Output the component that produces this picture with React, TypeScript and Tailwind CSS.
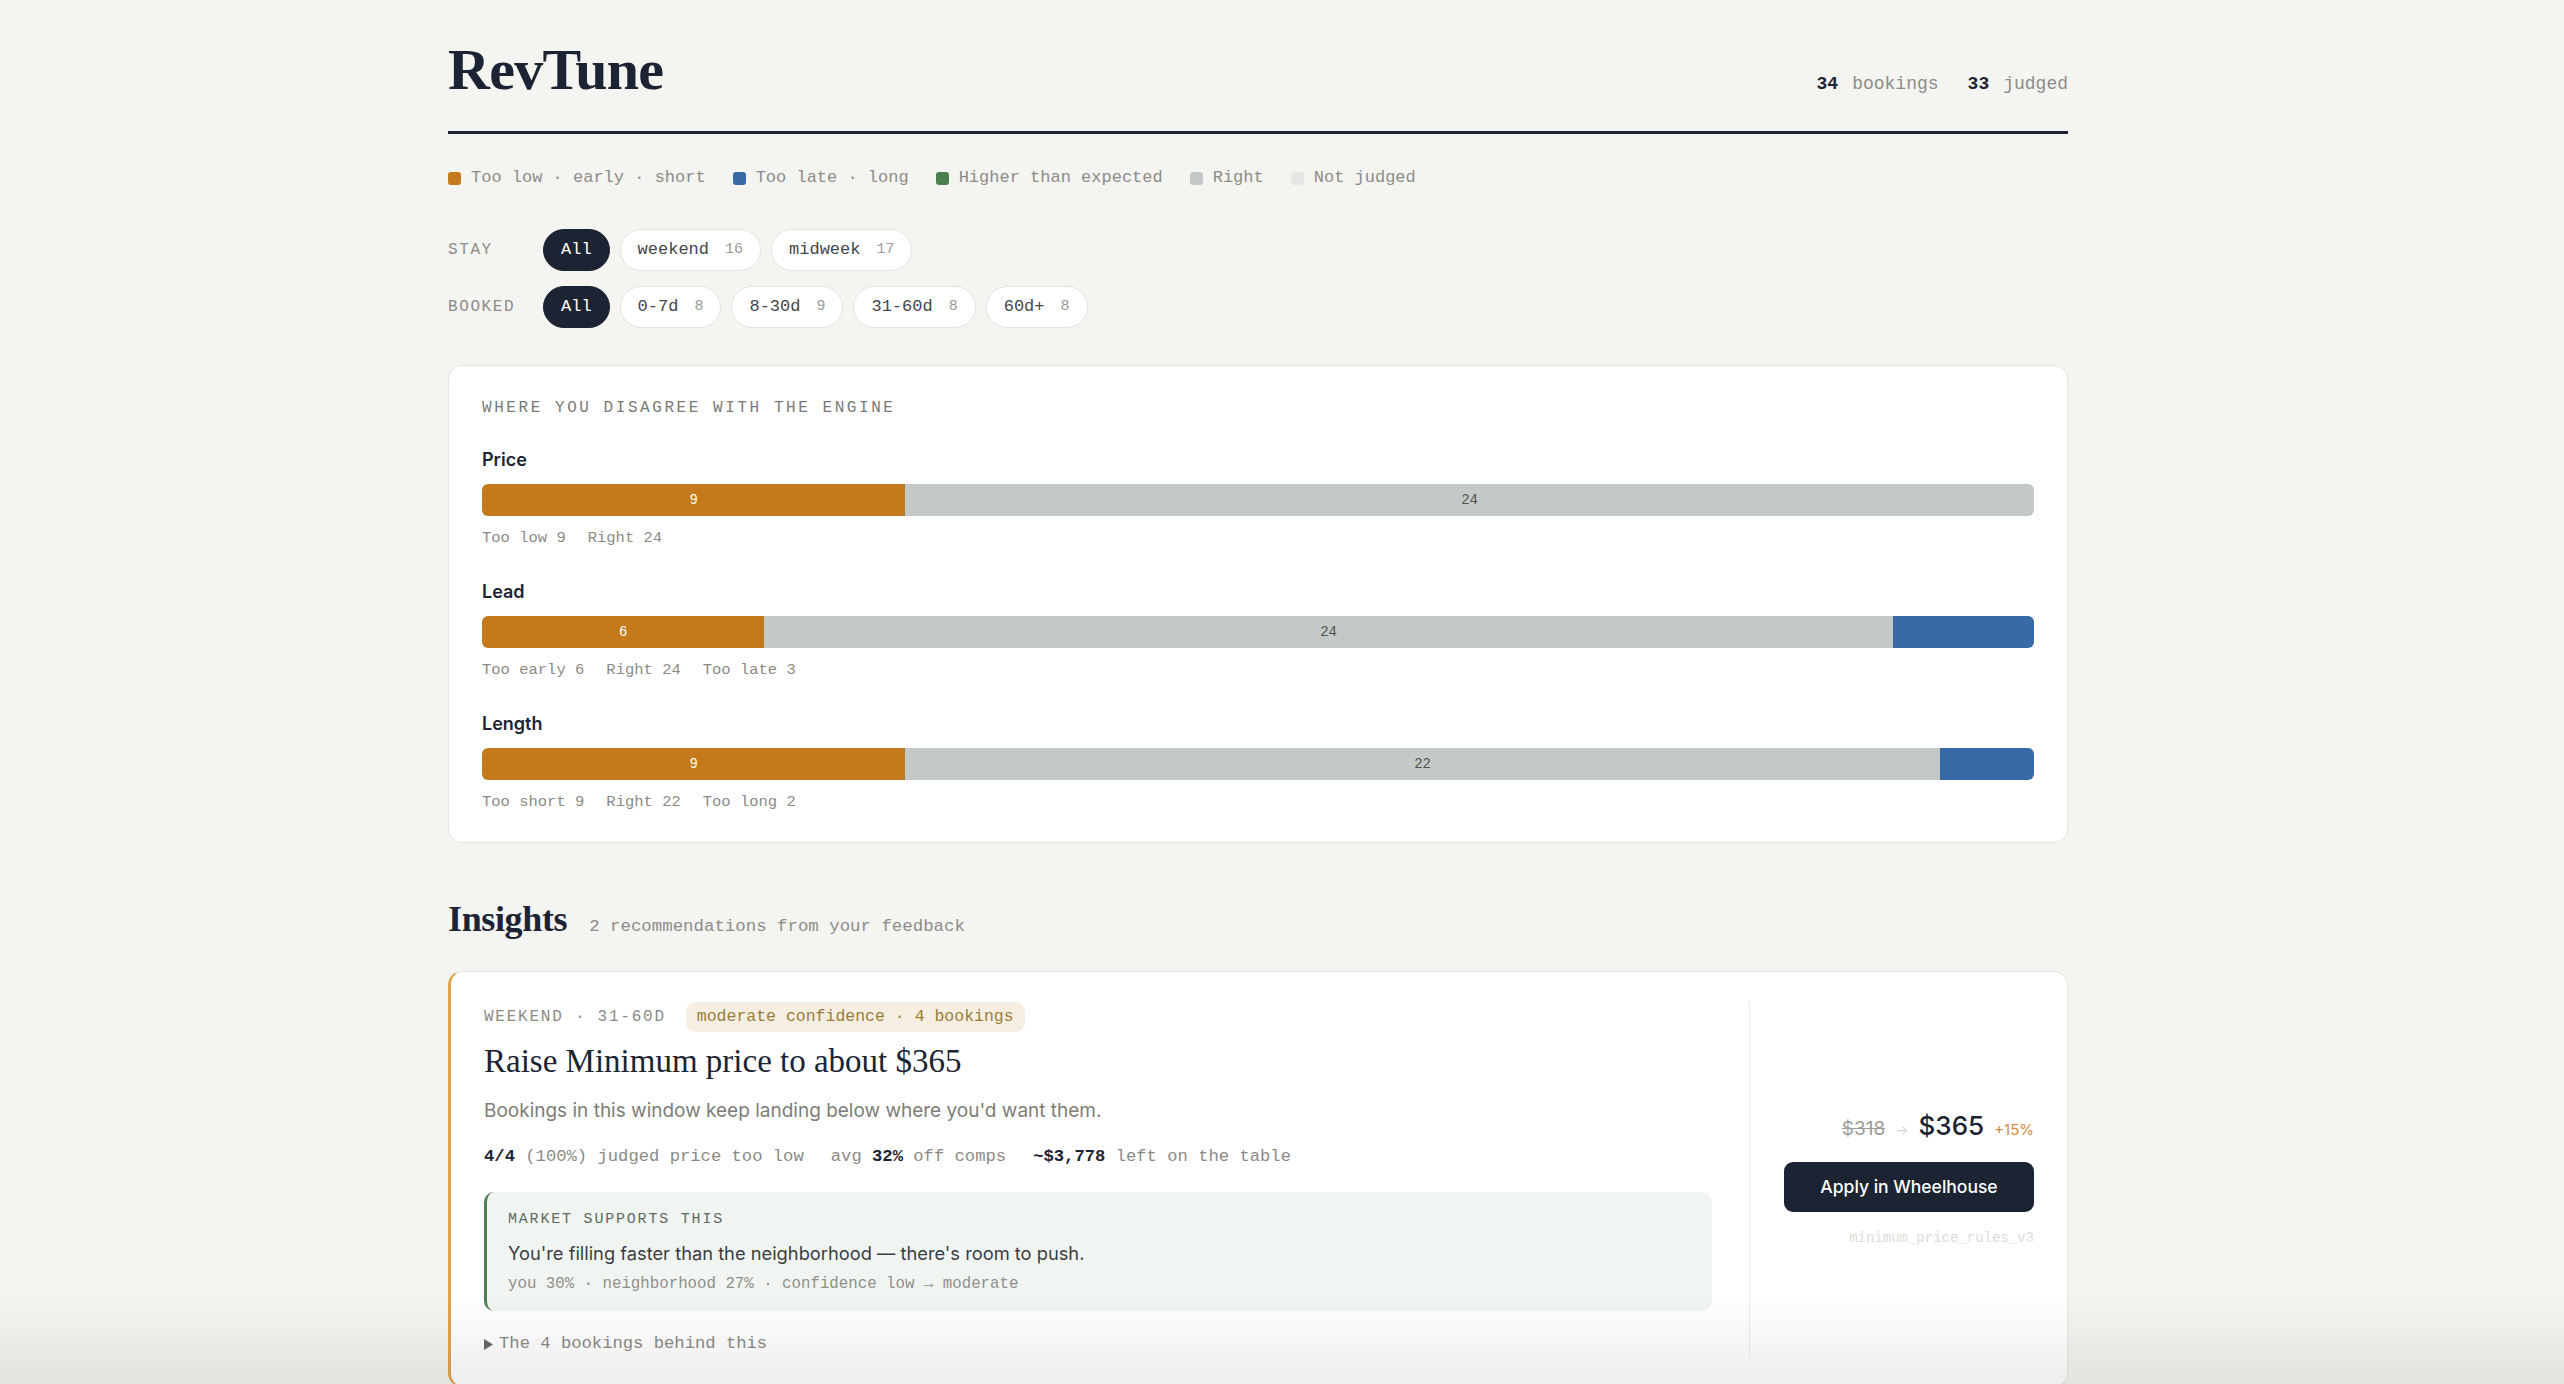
import React from "react";

const MONO = "font-['Liberation_Mono','DejaVu_Sans_Mono',monospace]";
const SERIF = "font-['Liberation_Serif','DejaVu_Serif',serif]";
const SANS = "font-['Inter','Noto_Sans',sans-serif]";

type Seg = { n: number; color: string; text: string; show: boolean };

const rows: { label: string; segs: Seg[]; summary: string[] }[] = [
  {
    label: "Price",
    segs: [
      { n: 9, color: "bg-[#c47a1b]", text: "text-white", show: true },
      { n: 24, color: "bg-[#c3c9c6]", text: "text-[#4f5452]", show: true },
    ],
    summary: ["Too low 9", "Right 24"],
  },
  {
    label: "Lead",
    segs: [
      { n: 6, color: "bg-[#c47a1b]", text: "text-white", show: true },
      { n: 24, color: "bg-[#c3c9c6]", text: "text-[#4f5452]", show: true },
      { n: 3, color: "bg-[#386ba5]", text: "text-white", show: false },
    ],
    summary: ["Too early 6", "Right 24", "Too late 3"],
  },
  {
    label: "Length",
    segs: [
      { n: 9, color: "bg-[#c47a1b]", text: "text-white", show: true },
      { n: 22, color: "bg-[#c3c9c6]", text: "text-[#4f5452]", show: true },
      { n: 2, color: "bg-[#386ba5]", text: "text-white", show: false },
    ],
    summary: ["Too short 9", "Right 22", "Too long 2"],
  },
];

const legend = [
  { c: "bg-[#c47a1b]", t: "Too low · early · short" },
  { c: "bg-[#386ba5]", t: "Too late · long" },
  { c: "bg-[#4b7f50]", t: "Higher than expected" },
  { c: "bg-[#c3c9c6]", t: "Right" },
  { c: "bg-[#e6e7e4]", t: "Not judged" },
];

function Pill({ label, count, active }: { label: string; count?: number; active?: boolean }) {
  return (
    <div
      className={
        active
          ? "flex h-[42px] items-center rounded-full border border-[#1c2433] bg-[#1c2433] px-[17px] text-[17px] text-white"
          : "flex h-[42px] items-center gap-[16px] rounded-full border border-[#e4e4df] bg-white px-[17px] text-[17px] text-[#44464b]"
      }
    >
      <span>{label}</span>
      {count !== undefined && <span className="text-[15px] text-[#9c9c98]">{count}</span>}
    </div>
  );
}

export default function App() {
  return (
    <div className={`relative min-h-screen bg-[#f4f4f1] ${SANS}`}>
      <div className="ml-[448px] w-[1620px] pb-[40px]">
        {/* Header */}
        <div className="flex items-baseline justify-between border-b-[3px] border-[#1c2230] pt-[41px] pb-[32px]">
          <h1 className={`${SERIF} text-[58px] leading-[58px] font-bold tracking-[-0.012em] text-[#1c2433]`}>
            RevTune
          </h1>
          <div className={`${MONO} flex gap-[29px] text-[18px] leading-7 text-[#8c8c88]`}>
            <span>
              <span className="mr-[14px] font-bold text-[#1c2433]">34</span>bookings
            </span>
            <span>
              <span className="mr-[14px] font-bold text-[#1c2433]">33</span>judged
            </span>
          </div>
        </div>

        {/* Legend */}
        <div className={`${MONO} mt-[32px] flex items-center gap-[27px] text-[17px] leading-6 text-[#8c8c88]`}>
          {legend.map((l) => (
            <div key={l.t} className="flex items-center gap-[10px]">
              <span className={`h-[13px] w-[13px] rounded-[3px] ${l.c}`} />
              <span>{l.t}</span>
            </div>
          ))}
        </div>

        {/* Filters */}
        <div className={`${MONO} mt-[39px] flex flex-col gap-[15px]`}>
          <div className="flex items-center">
            <div className="w-[95px] text-[16px] tracking-[0.1em] text-[#8c8c88]">STAY</div>
            <div className="flex gap-[10px]">
              <Pill label="All" active />
              <Pill label="weekend" count={16} />
              <Pill label="midweek" count={17} />
            </div>
          </div>
          <div className="flex items-center">
            <div className="w-[95px] text-[16px] tracking-[0.1em] text-[#8c8c88]">BOOKED</div>
            <div className="flex gap-[10px]">
              <Pill label="All" active />
              <Pill label="0-7d" count={8} />
              <Pill label="8-30d" count={9} />
              <Pill label="31-60d" count={8} />
              <Pill label="60d+" count={8} />
            </div>
          </div>
        </div>

        {/* Disagree card */}
        <div className="mt-[37px] rounded-[14px] border border-[#e6e6e1] bg-white px-[33px] pt-[30px] pb-[29px]">
          <div className={`${MONO} text-[16px] leading-6 tracking-[0.16em] text-[#7a7a78]`}>
            WHERE YOU DISAGREE WITH THE ENGINE
          </div>
          <div className="mt-[26px] flex flex-col gap-[29px]">
            {rows.map((r) => {
              const total = r.segs.reduce((a, s) => a + s.n, 0);
              return (
                <div key={r.label}>
                  <div className="text-[18px] leading-7 font-semibold text-[#1c2433]">{r.label}</div>
                  <div className="mt-[10px] flex h-[32px] overflow-hidden rounded-[6px]">
                    {r.segs.map((s, i) => (
                      <div
                        key={i}
                        className={`flex h-full items-center justify-center ${MONO} text-[14px] ${s.color} ${s.text}`}
                        style={{ width: `${(s.n / total) * 100}%` }}
                      >
                        {s.show ? s.n : ""}
                      </div>
                    ))}
                  </div>
                  <div className={`${MONO} mt-[11px] flex gap-[22px] text-[15.5px] leading-[22px] text-[#8b8b86]`}>
                    {r.summary.map((t) => (
                      <span key={t}>{t}</span>
                    ))}
                  </div>
                </div>
              );
            })}
          </div>
        </div>

        {/* Insights */}
        <div className="mt-[54px] flex items-baseline gap-[22px]">
          <h2 className={`${SERIF} text-[36px] leading-[44px] font-bold tracking-[-0.01em] text-[#1c2433]`}>Insights</h2>
          <span className={`${MONO} text-[17.4px] text-[#8c8c88]`}>2 recommendations from your feedback</span>
        </div>

        <div className="mt-[30px] flex rounded-[14px] border border-l-[3px] border-[#e6e6e1] border-l-[#e0a550] bg-white pl-[33px] pr-[33px] pt-[30px] pb-[30px]">
          <div className="flex-1 pr-[37px]">
            <div className="flex h-[30px] items-center gap-[20px]">
              <span className={`${MONO} text-[16px] tracking-[0.11em] text-[#8a8a86]`}>WEEKEND · 31-60D</span>
              <span className={`${MONO} flex h-[30px] items-center rounded-[10px] bg-[#f6efe1] px-[11px] text-[16.5px] text-[#9b7b3c]`}>
                moderate confidence · 4 bookings
              </span>
            </div>
            <div className={`${SERIF} mt-[9px] text-[33px] leading-[40px] text-[#1c2433]`}>
              Raise Minimum price to about $365
            </div>
            <div className="mt-[16px] text-[19px] leading-7 text-[#7d7d78]">
              Bookings in this window keep landing below where you'd want them.
            </div>
            <div className={`${MONO} mt-[19px] flex gap-[27px] text-[17.2px] leading-[26px] text-[#8b8b86]`}>
              <span>
                <span className="font-bold text-[#1c2433]">4/4</span> (100%) judged price too low
              </span>
              <span>
                avg <span className="font-bold text-[#1c2433]">32%</span> off comps
              </span>
              <span>
                <span className="font-bold text-[#1c2433]">~$3,778</span> left on the table
              </span>
            </div>
            <div className="mt-[22px] rounded-[10px] border-l-[3px] border-[#4e7f55] bg-[#f1f5f1] pt-[17px] pb-[16px] pl-[21px] pr-[20px]">
              <div className={`${MONO} text-[15px] leading-[22px] tracking-[0.12em] text-[#5d6a5f]`}>MARKET SUPPORTS THIS</div>
              <div className="mt-[8px] text-[18.3px] leading-7 text-[#3a3d42]">
                You're filling faster than the neighborhood — there's room to push.
              </div>
              <div className={`${MONO} mt-[6px] text-[15.75px] leading-[22px] text-[#8f8f8a]`}>
                you 30% · neighborhood 27% · confidence low → moderate
              </div>
            </div>
            <div className={`${MONO} mt-[21px] flex items-center gap-[6px] text-[17.2px] leading-6 text-[#8b8b86]`}>
              <svg width="9" height="11" viewBox="0 0 9 11">
                <polygon points="0,0 9,5.5 0,11" fill="#6b6b68" />
              </svg>
              <span>The 4 bookings behind this</span>
            </div>
          </div>
          <div className="flex w-[285px] flex-col items-end justify-center border-l border-[#ececea] pl-[33px]">
            <div className="flex items-baseline gap-[10px]">
              <span className="text-[19px] text-[#9c9c98] line-through">$318</span>
              <span className="text-[14px] text-[#d4d4d0]">→</span>
              <span className="text-[26px] leading-8 font-medium text-[#1c2433]">$365</span>
              <span className="text-[15px] text-[#d48a3e]">+15%</span>
            </div>
            <button className="mt-[18px] flex h-[50px] w-[250px] items-center justify-center rounded-[9px] bg-[#1c2433] text-[17.5px] font-medium text-white">
              Apply in Wheelhouse
            </button>
            <div className={`${MONO} mt-[16px] text-[14px] leading-5 text-[#dcdcd8]`}>minimum_price_rules_v3</div>
          </div>
        </div>
      </div>
      <div className="pointer-events-none fixed inset-x-0 bottom-0 h-[90px] bg-gradient-to-b from-black/0 to-black/[0.07]" />
    </div>
  );
}
